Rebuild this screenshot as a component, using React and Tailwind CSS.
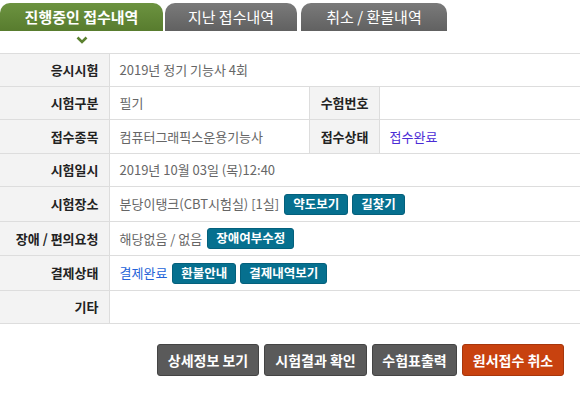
import React from "react";

const font = {
  fontFamily: '"Noto Sans CJK KR", "Noto Sans", sans-serif',
};

function SmallBtn({ children }) {
  return (
    <button className="inline-flex items-center h-[21px] px-[8px] rounded-[3px] bg-[#06708f] border border-[#04607c] text-white text-[12.5px] font-bold leading-none align-middle">
      {children}
    </button>
  );
}

function BigBtn({ children, red }) {
  return (
    <button
      className={
        "h-[32px] rounded-[3px] border text-white text-[14px] font-bold leading-none " +
        (red
          ? "bg-[#c8420f] border-[#a8360b]"
          : "bg-[#5a5a5a] border-[#444444]")
      }
    >
      {children}
    </button>
  );
}

const th =
  "bg-[#f3f3f3] text-right pr-[10px] text-[13px] font-bold text-[#222] border-r border-[#dddddd] whitespace-nowrap";
const td = "pl-[10px] text-[13px] text-[#666] whitespace-nowrap";

export default function App() {
  return (
    <div className="w-[580px] h-[399px] bg-white overflow-hidden" style={font}>
      {/* Tabs */}
      <div className="flex pt-[3px] h-[31px]">
        <div className="w-[163px] h-[28px] rounded-t-[10px] bg-gradient-to-b from-[#6c9340] to-[#587c2e] flex items-center justify-center text-white text-[15px] font-bold">
          진행중인 접수내역
        </div>
        <div className="ml-[2px] w-[132px] h-[28px] rounded-t-[10px] bg-gradient-to-b from-[#7a7a7a] to-[#616161] flex items-center justify-center text-white text-[15px]">
          지난 접수내역
        </div>
        <div className="ml-[4px] w-[146px] h-[28px] rounded-t-[10px] bg-gradient-to-b from-[#7a7a7a] to-[#616161] flex items-center justify-center text-white text-[15px]">
          취소 / 환불내역
        </div>
      </div>
      <div className="h-[22px] w-[163px] flex justify-center pt-[5px]">
        <svg width="12" height="8" viewBox="0 0 12 8">
          <path d="M1.5 1.5 L6 6 L10.5 1.5" fill="none" stroke="#5b812f" strokeWidth="2.6" />
        </svg>
      </div>

      {/* Table */}
      <table className="w-full border-collapse border-t border-[#dddddd] table-fixed">
        <colgroup>
          <col className="w-[109px]" />
          <col className="w-[200px]" />
          <col className="w-[70px]" />
          <col />
        </colgroup>
        <tbody>
          <tr className="h-[33px] border-b border-[#dddddd]">
            <th className={th}>응시시험</th>
            <td className={td} colSpan={3}>2019년 정기 기능사 4회</td>
          </tr>
          <tr className="h-[33px] border-b border-[#dddddd]">
            <th className={th}>시험구분</th>
            <td className={td + " border-r border-[#dddddd]"}>필기</td>
            <th className={th}>수험번호</th>
            <td className={td}></td>
          </tr>
          <tr className="h-[34px] border-b border-[#dddddd]">
            <th className={th}>접수종목</th>
            <td className={td + " border-r border-[#dddddd]"}>컴퓨터그래픽스운용기능사</td>
            <th className={th}>접수상태</th>
            <td className={td}>
              <span className="text-[#4b2cd6]">접수완료</span>
            </td>
          </tr>
          <tr className="h-[33px] border-b border-[#dddddd]">
            <th className={th}>시험일시</th>
            <td className={td} colSpan={3}>2019년 10월 03일 (목)12:40</td>
          </tr>
          <tr className="h-[35px] border-b border-[#dddddd]">
            <th className={th}>시험장소</th>
            <td className={td} colSpan={3}>
              <div className="flex items-center gap-[4px]">
                <span className="mr-[1px]">분당이탱크(CBT시험실) [1실]</span>
                <SmallBtn>약도보기</SmallBtn>
                <SmallBtn>길찾기</SmallBtn>
              </div>
            </td>
          </tr>
          <tr className="h-[34px] border-b border-[#dddddd]">
            <th className={th}>장애 / 편의요청</th>
            <td className={td} colSpan={3}>
              <div className="flex items-center gap-[5px]">
                <span>해당없음 / 없음</span>
                <SmallBtn>장애여부수정</SmallBtn>
              </div>
            </td>
          </tr>
          <tr className="h-[35px] border-b border-[#dddddd]">
            <th className={th}>결제상태</th>
            <td className={td} colSpan={3}>
              <div className="flex items-center gap-[4px]">
                <span className="text-[#2563d8] mr-[1px]">결제완료</span>
                <SmallBtn>환불안내</SmallBtn>
                <SmallBtn>결제내역보기</SmallBtn>
              </div>
            </td>
          </tr>
          <tr className="h-[33px] border-b border-[#dddddd]">
            <th className={th}>기타</th>
            <td className={td} colSpan={3}></td>
          </tr>
        </tbody>
      </table>

      {/* Bottom buttons */}
      <div className="flex justify-end gap-[5px] pr-[16px] pt-[20px]">
        <div className="w-[102px] flex"><BigBtn><span className="block w-[100px]">상세정보 보기</span></BigBtn></div>
        <div className="w-[103px] flex"><BigBtn><span className="block w-[101px]">시험결과 확인</span></BigBtn></div>
        <div className="w-[85px] flex"><BigBtn><span className="block w-[83px]">수험표출력</span></BigBtn></div>
        <div className="w-[102px] flex"><BigBtn red><span className="block w-[100px]">원서접수 취소</span></BigBtn></div>
      </div>
    </div>
  );
}
